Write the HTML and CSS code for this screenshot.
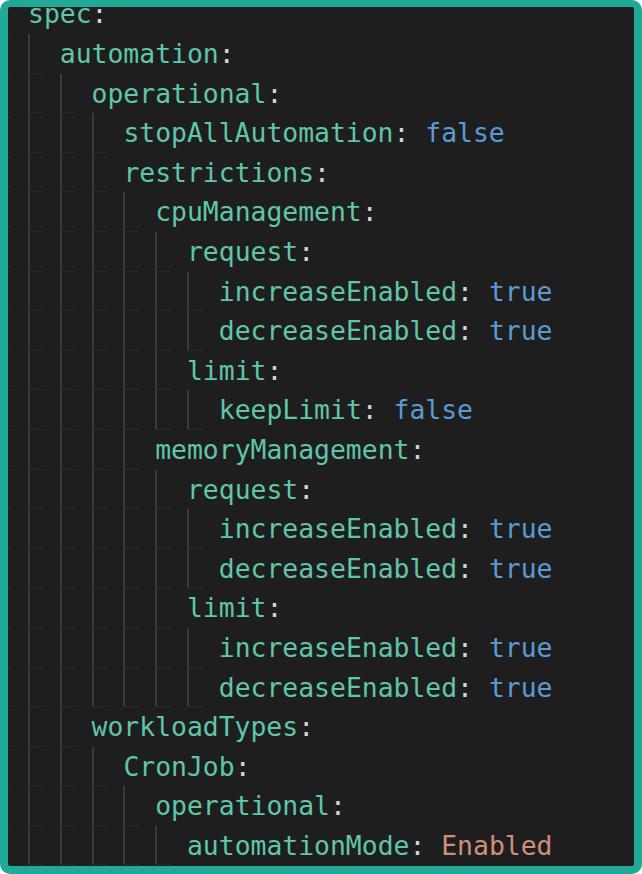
FILE: index.html
```html
<!DOCTYPE html>
<html lang="en">
<head>
<meta charset="utf-8">
<title>YAML spec</title>
<link rel="stylesheet" href="styles.css">
</head>
<body>
<div class="frame">
  <div class="editor">
    <div class="code">
      <div class="row"><span class="gutter"></span><span class="k">spec</span><span class="p">:</span></div>
      <div class="row"><span class="gutter"></span><span class="ind"></span><span class="k">automation</span><span class="p">:</span></div>
      <div class="row"><span class="gutter"></span><span class="ind"></span><span class="ind"></span><span class="k">operational</span><span class="p">:</span></div>
      <div class="row"><span class="gutter"></span><span class="ind"></span><span class="ind"></span><span class="ind"></span><span class="k">stopAllAutomation</span><span class="p">: </span><span class="b">false</span></div>
      <div class="row"><span class="gutter"></span><span class="ind"></span><span class="ind"></span><span class="ind"></span><span class="k">restrictions</span><span class="p">:</span></div>
      <div class="row"><span class="gutter"></span><span class="ind"></span><span class="ind"></span><span class="ind"></span><span class="ind"></span><span class="k">cpuManagement</span><span class="p">:</span></div>
      <div class="row"><span class="gutter"></span><span class="ind"></span><span class="ind"></span><span class="ind"></span><span class="ind"></span><span class="ind"></span><span class="k">request</span><span class="p">:</span></div>
      <div class="row"><span class="gutter"></span><span class="ind"></span><span class="ind"></span><span class="ind"></span><span class="ind"></span><span class="ind"></span><span class="ind"></span><span class="k">increaseEnabled</span><span class="p">: </span><span class="b">true</span></div>
      <div class="row"><span class="gutter"></span><span class="ind"></span><span class="ind"></span><span class="ind"></span><span class="ind"></span><span class="ind"></span><span class="ind"></span><span class="k">decreaseEnabled</span><span class="p">: </span><span class="b">true</span></div>
      <div class="row"><span class="gutter"></span><span class="ind"></span><span class="ind"></span><span class="ind"></span><span class="ind"></span><span class="ind"></span><span class="k">limit</span><span class="p">:</span></div>
      <div class="row"><span class="gutter"></span><span class="ind"></span><span class="ind"></span><span class="ind"></span><span class="ind"></span><span class="ind"></span><span class="ind"></span><span class="k">keepLimit</span><span class="p">: </span><span class="b">false</span></div>
      <div class="row"><span class="gutter"></span><span class="ind"></span><span class="ind"></span><span class="ind"></span><span class="ind"></span><span class="k">memoryManagement</span><span class="p">:</span></div>
      <div class="row"><span class="gutter"></span><span class="ind"></span><span class="ind"></span><span class="ind"></span><span class="ind"></span><span class="ind"></span><span class="k">request</span><span class="p">:</span></div>
      <div class="row"><span class="gutter"></span><span class="ind"></span><span class="ind"></span><span class="ind"></span><span class="ind"></span><span class="ind"></span><span class="ind"></span><span class="k">increaseEnabled</span><span class="p">: </span><span class="b">true</span></div>
      <div class="row"><span class="gutter"></span><span class="ind"></span><span class="ind"></span><span class="ind"></span><span class="ind"></span><span class="ind"></span><span class="ind"></span><span class="k">decreaseEnabled</span><span class="p">: </span><span class="b">true</span></div>
      <div class="row"><span class="gutter"></span><span class="ind"></span><span class="ind"></span><span class="ind"></span><span class="ind"></span><span class="ind"></span><span class="k">limit</span><span class="p">:</span></div>
      <div class="row"><span class="gutter"></span><span class="ind"></span><span class="ind"></span><span class="ind"></span><span class="ind"></span><span class="ind"></span><span class="ind"></span><span class="k">increaseEnabled</span><span class="p">: </span><span class="b">true</span></div>
      <div class="row"><span class="gutter"></span><span class="ind"></span><span class="ind"></span><span class="ind"></span><span class="ind"></span><span class="ind"></span><span class="ind"></span><span class="k">decreaseEnabled</span><span class="p">: </span><span class="b">true</span></div>
      <div class="row"><span class="gutter"></span><span class="ind"></span><span class="ind"></span><span class="k">workloadTypes</span><span class="p">:</span></div>
      <div class="row"><span class="gutter"></span><span class="ind"></span><span class="ind"></span><span class="ind"></span><span class="k">CronJob</span><span class="p">:</span></div>
      <div class="row"><span class="gutter"></span><span class="ind"></span><span class="ind"></span><span class="ind"></span><span class="ind"></span><span class="k">operational</span><span class="p">:</span></div>
      <div class="row"><span class="gutter"></span><span class="ind"></span><span class="ind"></span><span class="ind"></span><span class="ind"></span><span class="ind"></span><span class="k">automationMode</span><span class="p">: </span><span class="s">Enabled</span></div>
    </div>
  </div>
</div>
</body>
</html>
```
FILE: styles.css
```css
html, body {
  margin: 0;
  padding: 0;
  background: #ffffff;
}

.frame {
  width: 642px;
  height: 874px;
  box-sizing: border-box;
  padding: 7px 8px 8px 8px;
  background: #22a897;
  border-radius: 10px;
}

.editor {
  height: 100%;
  background: #1e1e1e;
  overflow: hidden;
  border-radius: 2px;
}

.code {
  margin-top: -12.6px;
  font-family: "DejaVu Sans Mono", "Liberation Mono", monospace;
  font-size: 26.4px;
}

.row {
  display: flex;
  height: 39.6px;
  line-height: 39.6px;
  white-space: pre;
}

.gutter {
  flex: none;
  width: 20px;
  position: relative;
}

.gutter::after {
  content: "";
  position: absolute;
  left: 0;
  bottom: 0;
  width: 3px;
  height: 1px;
  background: #2a2a2a;
}

.ind {
  flex: none;
  width: 31.8px;
  position: relative;
}

.ind::before {
  content: "";
  position: absolute;
  left: 0;
  top: 0;
  bottom: 0;
  width: 2px;
  background: #3a3a3a;
}

.ind::after {
  content: "";
  position: absolute;
  left: 0;
  bottom: 0;
  width: 15px;
  height: 1px;
  background: #2a2a2a;
}

.k { color: #5fc6a9; }
.p { color: #d4d4d4; }
.b { color: #5a9bd5; }
.s { color: #ce9178; }
```
